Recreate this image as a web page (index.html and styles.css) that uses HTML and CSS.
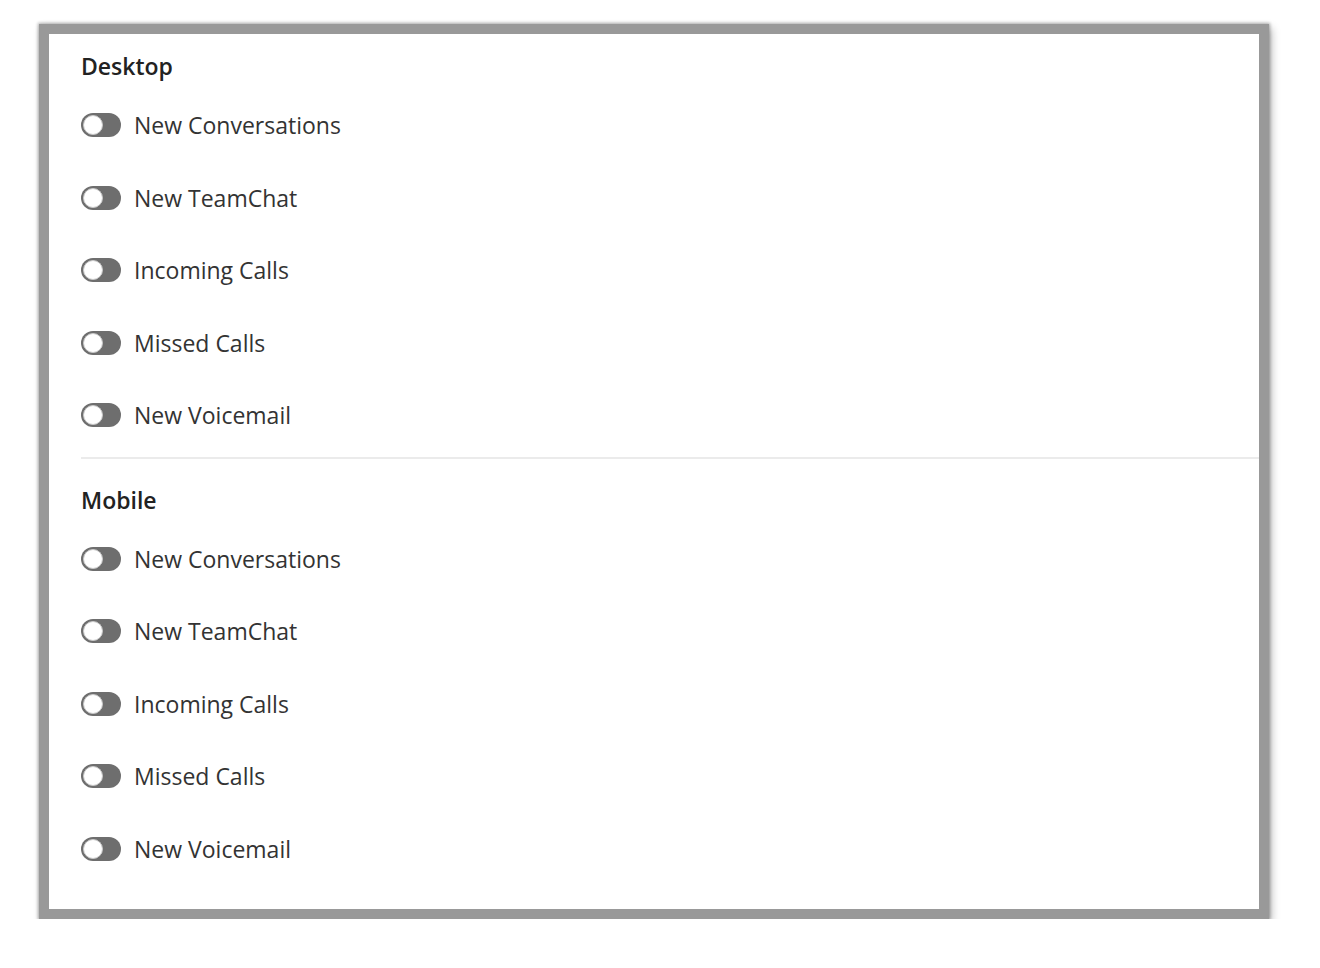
FILE: index.html
```html
<!DOCTYPE html>
<html lang="en">
<head>
    <meta charset="UTF-8">
    <meta name="viewport" content="width=device-width, initial-scale=1.0">
    <title>Notifications</title>
    <link rel="stylesheet" href="styles.css">
</head>
<body>
    <div class="panel">
        <div class="section section-desktop">
            <h2 class="section-title">Desktop</h2>
            <label class="setting"><span class="toggle"></span><span class="setting-label">New Conversations</span></label>
            <label class="setting"><span class="toggle"></span><span class="setting-label">New TeamChat</span></label>
            <label class="setting"><span class="toggle"></span><span class="setting-label">Incoming Calls</span></label>
            <label class="setting"><span class="toggle"></span><span class="setting-label">Missed Calls</span></label>
            <label class="setting"><span class="toggle"></span><span class="setting-label">New Voicemail</span></label>
        </div>
        <hr class="divider">
        <div class="section section-mobile">
            <h2 class="section-title">Mobile</h2>
            <label class="setting"><span class="toggle"></span><span class="setting-label">New Conversations</span></label>
            <label class="setting"><span class="toggle"></span><span class="setting-label">New TeamChat</span></label>
            <label class="setting"><span class="toggle"></span><span class="setting-label">Incoming Calls</span></label>
            <label class="setting"><span class="toggle"></span><span class="setting-label">Missed Calls</span></label>
            <label class="setting"><span class="toggle"></span><span class="setting-label">New Voicemail</span></label>
        </div>
    </div>
</body>
</html>
```

FILE: styles.css
```css
body {
    font-family: "Open Sans", "Noto Sans", Arial, sans-serif;
    background-color: #fff;
    margin: 0;
    padding: 24px 0 0 39px;
}

.panel {
    width: 1210px;
    height: 875px;
    background-color: #fff;
    border: 10px solid #999;
    box-shadow: 0 0 3px 1px rgba(0, 0, 0, 0.3), 3px 4px 8px rgba(0, 0, 0, 0.25);
}

.section {
    padding: 0 32px;
}

.section-desktop {
    padding-top: 17px;
}

.section-mobile {
    padding-top: 26px;
}

.section-title {
    margin: 0 0 8px;
    font-size: 23px;
    font-weight: 600;
    line-height: 30px;
    color: #222;
}

.setting {
    display: flex;
    align-items: center;
    height: 72.5px;
    cursor: pointer;
}

.toggle {
    position: relative;
    width: 40px;
    height: 24px;
    border-radius: 12px;
    background-color: #6e6e6e;
    flex-shrink: 0;
}

.toggle::after {
    content: "";
    position: absolute;
    left: 2px;
    top: 2px;
    width: 20px;
    height: 20px;
    border-radius: 50%;
    background-color: #fff;
    box-sizing: border-box;
    border: 1px solid #c8c8c8;
}

.setting-label {
    margin-left: 13px;
    font-size: 23px;
    color: #333;
}

.divider {
    margin: 5px 0 0 32px;
    border: none;
    height: 2px;
    background-color: #ebebeb;
}
```
